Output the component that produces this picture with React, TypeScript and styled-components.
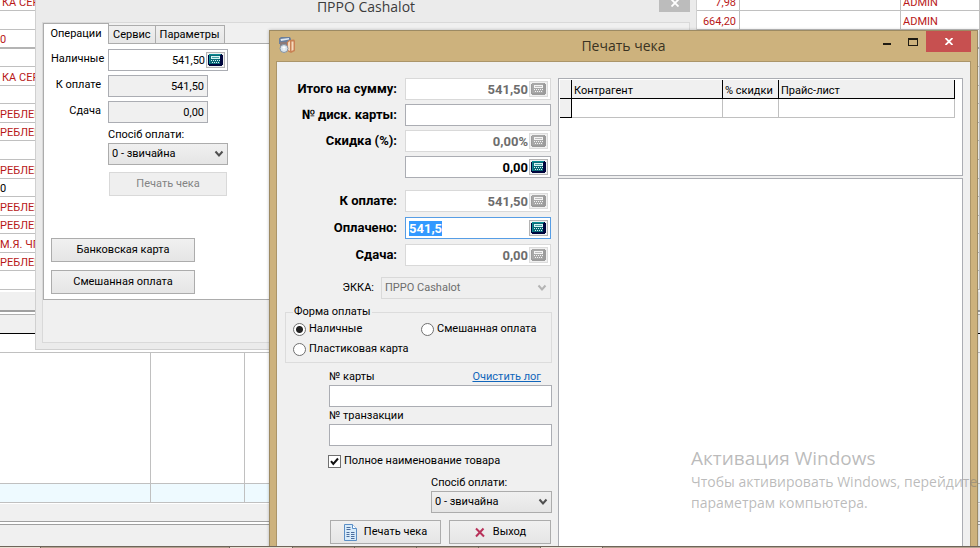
import React, { useEffect, useRef } from "react";
import styled, { createGlobalStyle, css } from "styled-components";

const UI = `Roboto, "Liberation Sans", sans-serif`;
const SEGOE = `"Open Sans", "Noto Sans", sans-serif`;

const GlobalStyle = createGlobalStyle`
  * { box-sizing: border-box; }
  html, body, #root { height: 100%; }
  body { margin: 0; overflow: hidden; background: #fff; }
  button, input, select { font: inherit; color: inherit; margin: 0; }
  ::selection { background: #3399ff; color: #fff; }
`;

const Desktop = styled.main`
  position: relative;
  height: 100%;
  overflow: hidden;
  font: 11px/14px ${UI};
  color: #000;
`;

/* ---------- application behind the windows ---------- */

const Backdrop = styled.div`
  display: flex;
  flex-direction: column;
  height: 100%;
`;

const Journal = styled.table`
  flex: none;
  display: table;
  width: 100%;
  margin-top: -8px;
  table-layout: fixed;
  border-collapse: separate;
  border-spacing: 0;
`;

const JournalLine = styled.tr<{ $short?: boolean; $heavy?: boolean; $ink?: "red" | "black" }>`
  height: ${(p) => (p.$short ? 18 : 19)}px;
  color: ${(p) => (p.$ink === "black" ? "#000" : "#b81818")};
  & > td {
    border-bottom: ${(p) => (p.$heavy ? "2px solid #b4b4b4" : "1px solid #c0c0c0")};
  }
`;

const JournalCell = styled.td<{ $right?: boolean; $inset?: boolean }>`
  padding: 0 3px 0 ${(p) => (p.$inset ? "2px" : "0")};
  overflow: hidden;
  white-space: nowrap;
  border-right: 1px solid #c0c0c0;
  text-align: ${(p) => (p.$right ? "right" : "left")};
  vertical-align: bottom;
  line-height: 14px;
`;

const Strip = styled.div<{ $h: number; $bg?: string; $top?: string; $bottom?: string }>`
  flex: none;
  height: ${(p) => p.$h}px;
  background: ${(p) => p.$bg ?? "#fff"};
  border-top: ${(p) => p.$top ?? "0"};
  border-bottom: ${(p) => p.$bottom ?? "0"};
`;

const Lanes = styled.div<{ $tint?: boolean }>`
  display: grid;
  grid-template-columns: 151px 94px 1fr;
  flex: ${(p) => (p.$tint ? "none" : "1")};
  height: ${(p) => (p.$tint ? "20px" : "auto")};
  background: ${(p) => (p.$tint ? "#eefaff" : "#fff")};
  border: solid #c0c0c0;
  border-width: ${(p) => (p.$tint ? "1px 0" : "1px 0 0")};
`;

const Lane = styled.div`
  border-right: 1px solid #c0c0c0;
`;

const Taskbar = styled.footer`
  position: absolute;
  inset: auto 0 0 0;
  height: 2px;
  display: grid;
  grid-template-columns: 41px 189px 63px repeat(5, 62px) 1fr;
  background: #b7a391;
  border-top: 1px solid #6e655a;
`;

const TaskItem = styled.span<{ $lit?: boolean }>`
  border-right: 1px solid #6e655a;
  background: ${(p) => (p.$lit ? "#eadfd2" : "#b7a391")};
`;

/* ---------- shared controls ---------- */

const Box = styled.div<{ $state?: "off" | "focus" | "plain" }>`
  display: flex;
  align-items: center;
  height: 22px;
  padding: 0 2px;
  background: #fff;
  border: 1px solid
    ${(p) => (p.$state === "off" ? "#d9d9d9" : p.$state === "focus" ? "#569de5" : "#abadb3")};
`;

const Entry = styled.input<{ $align?: "left" | "right" }>`
  flex: 1;
  min-width: 0;
  width: 100%;
  height: 16px;
  padding: 0 1px;
  border: 0;
  outline: 0;
  background: transparent;
  text-align: ${(p) => p.$align ?? "right"};
  &:disabled { color: #6d6d6d; }
`;

const CalcButton = styled.button`
  flex: none;
  display: grid;
  place-items: center;
  width: 19px;
  height: 16px;
  padding: 0;
  background: #f0f0f0;
  border: 1px solid #b4b4b4;
  &:disabled { border-color: #dcdcdc; }
`;

const buttonLook = css`
  display: flex;
  align-items: center;
  justify-content: center;
  height: 24px;
  padding: 0;
  background: linear-gradient(#f0f0f0, #e5e5e5);
  border: 1px solid #acacac;
  &:disabled { color: #838383; background: #efefef; border-color: #d9d9d9; }
`;

const PushButton = styled.button`
  ${buttonLook}
`;

const SelectShell = styled.div<{ $off?: boolean }>`
  display: grid;
  align-items: center;
  height: 22px;
  background: ${(p) => (p.$off ? "#efefef" : "linear-gradient(#f0f0f0, #e5e5e5)")};
  border: 1px solid ${(p) => (p.$off ? "#d9d9d9" : "#acacac")};
  color: ${(p) => (p.$off ? "#6d6d6d" : "#000")};
  & > * { grid-area: 1 / 1; }
  & > svg { justify-self: end; margin-right: 3px; pointer-events: none; }
`;

const NativeSelect = styled.select`
  appearance: none;
  width: 100%;
  height: 20px;
  padding: 0 18px 0 3px;
  border: 0;
  outline: 0;
  background: transparent;
  &:disabled { color: inherit; opacity: 1; }
`;

function Chevron({ off }: { off?: boolean }) {
  return (
    <svg width="10" height="8" viewBox="0 0 10 8" aria-hidden="true">
      <path d="M1.5 1.5 5 5.5 8.500 1.500" fill="none" stroke={off ? "#b4b4b4" : "#505050"} strokeWidth="2" />
    </svg>
  );
}

function Picker({ id, value, off }: { id: string; value: string; off?: boolean }) {
  return (
    <SelectShell $off={off}>
      <NativeSelect id={id} disabled={off} defaultValue={value}>
        <option>{value}</option>
      </NativeSelect>
      <Chevron off={off} />
    </SelectShell>
  );
}

function CalcIcon({ off }: { off?: boolean }) {
  const dark = off ? "#9c9c9c" : "#00063e";
  const edge = off ? "#a8a8a8" : "#0b8c94";
  const face = off ? "#a8a8a8" : "#0b6876";
  const dot = off ? "#f4f4f4" : "#d6f4f4";
  return (
    <svg width="15" height="12" viewBox="0 0 15 12" shapeRendering="crispEdges" aria-hidden="true">
      <path d="M1 0h13v1h1v10h-1v1H1v-1H0V1h1z" fill={dark} />
      <path d="M1 0h12v1H2v9H1z" fill={edge} />
      <path d="M2 1h10v9H2z" fill={face} />
      <path d="M3 2h9v3H3z" fill={dot} />
      <path d="M4 3h7v1H4z" fill={off ? "#bdbdbd" : "#48a6a8"} />
      <path
        d="M3 6h1v1H3zM5 6h1v1H5zM7 6h1v1H7zM9 6h1v1H9zM11 6h1v1h-1zM4 8h1v1H4zM6 8h1v1H6zM8 8h1v1H8zM10 8h1v1h-1z"
        fill={dot}
      />
    </svg>
  );
}

function Amount(p: { id: string; value: string; off?: boolean; focus?: boolean }) {
  const ref = useRef<HTMLInputElement>(null);
  useEffect(() => {
    if (p.focus) {
      ref.current?.focus();
      ref.current?.select();
    }
  }, [p.focus]);
  return (
    <Box $state={p.off ? "off" : p.focus ? "focus" : "plain"}>
      <Entry ref={ref} id={p.id} defaultValue={p.value} disabled={p.off} $align={p.focus ? "left" : "right"} />
      <CalcButton type="button" disabled={p.off} aria-label="Калькулятор">
        <CalcIcon off={p.off} />
      </CalcButton>
    </Box>
  );
}

/* ---------- Cashalot window ---------- */

const CashalotWindow = styled.section`
  position: absolute;
  top: 0;
  left: 35px;
  right: 283px;
  padding: 0 6px 6px;
  background: #ebebeb;
  border: 1px solid #d0d0d0;
  border-top: 0;
`;

const CashalotTitle = styled.header`
  display: grid;
  grid-template-columns: 31px 1fr 31px;
  height: 22px;
  font: 14px/14px ${SEGOE};
  color: #3c3c3c;
  text-align: center;
`;

const CashalotHeading = styled.h1`
  grid-column: 2;
  margin: 0;
  font: inherit;
`;

const FadedClose = styled.button`
  display: grid;
  place-items: start center;
  height: 12px;
  padding: 0;
  border: 0;
  background: #bcbcbc;
`;

const CashalotClient = styled.div`
  height: 321px;
  background: #f0f0f0;
  border: 1px solid #d9d9d9;
`;

const Tabs = styled.div`
  display: flex;
  align-items: flex-end;
  height: 20px;
`;

const Tab = styled.button<{ $active?: boolean }>`
  flex: none;
  width: ${(p) => (p.$active ? "66px" : "auto")};
  height: ${(p) => (p.$active ? "21px" : "18px")};
  margin: ${(p) => (p.$active ? "0 0 -1px" : "0")};
  padding: 0 4px;
  background: ${(p) => (p.$active ? "#fff" : "linear-gradient(#f0f0f0, #e6e6e6)")};
  border: 1px solid #acacac;
  border-left-width: ${(p) => (p.$active ? "1px" : "0")};
  border-bottom: 0;
`;

const TabPanel = styled.div`
  display: flex;
  flex-direction: column;
  align-items: flex-start;
  height: 257px;
  padding: 5px 7px;
  background: #fff;
  border: 1px solid #acacac;
`;

const PayGrid = styled.div`
  display: grid;
  grid-template-columns: 50px 120px;
  column-gap: 7px;
  row-gap: 4px;
  & > label { text-align: right; line-height: 20px; white-space: nowrap; }
`;

const ReadOnlyEntry = styled.input`
  width: 100px;
  height: 22px;
  padding: 0 3px;
  background: #f0f0f0;
  border: 1px solid #abadb3;
  text-align: right;
  outline: 0;
`;

const PayExtras = styled.div`
  display: grid;
  width: 120px;
  margin: 3px 0 0 57px;
  & > label { line-height: 17px; }
  & > button { margin: 7px 1px 0; }
`;

const WideActions = styled.div`
  display: grid;
  gap: 8px;
  width: 144px;
  margin-top: 42px;
`;

function Cashalot() {
  return (
    <CashalotWindow>
      <CashalotTitle>
        <CashalotHeading>ПРРО Cashalot</CashalotHeading>
        <FadedClose type="button" aria-label="Закрыть">
          <svg width="8" height="7" viewBox="0 0 8 7" aria-hidden="true">
            <path d="M.5-.5l7 7M7.500-.5l-7 7" stroke="#fff" strokeWidth="1.800" />
          </svg>
        </FadedClose>
      </CashalotTitle>
      <CashalotClient>
        <Tabs role="tablist">
          <Tab $active role="tab" aria-selected="true">Операции</Tab>
          <Tab role="tab">Сервис</Tab>
          <Tab role="tab">Параметры</Tab>
        </Tabs>
        <TabPanel role="tabpanel">
          <PayGrid>
            <label htmlFor="cash">Наличные</label>
            <Amount id="cash" value="541,50" />
            <label htmlFor="due">К оплате</label>
            <ReadOnlyEntry id="due" readOnly defaultValue="541,50" />
            <label htmlFor="change">Сдача</label>
            <ReadOnlyEntry id="change" readOnly defaultValue="0,00" />
          </PayGrid>
          <PayExtras>
            <label htmlFor="method">Спосіб оплати:</label>
            <Picker id="method" value="0 - звичайна" />
            <PushButton type="button" disabled>Печать чека</PushButton>
          </PayExtras>
          <WideActions>
            <PushButton type="button">Банковская карта</PushButton>
            <PushButton type="button">Смешанная оплата</PushButton>
          </WideActions>
        </TabPanel>
      </CashalotClient>
    </CashalotWindow>
  );
}

/* ---------- receipt window ---------- */

const ReceiptWindow = styled.section`
  position: absolute;
  inset: 30px 2px 0 269px;
  display: flex;
  flex-direction: column;
  padding: 0 6px;
  background: #cdb27d;
  border: 1px solid #9c8a63;
  border-bottom: 0;
  box-shadow: 0 0 3px rgba(0, 0, 0, 0.25);
`;

const ReceiptTitle = styled.header`
  flex: none;
  display: grid;
  grid-template-columns: 96px 1fr 96px;
  height: 30px;
`;

const TitleIcon = styled.span`
  padding: 5px 0 0 2px;
  line-height: 0;
`;

const ReceiptHeading = styled.h2`
  margin: 0;
  font: 14px/30px ${SEGOE};
  color: #3a3222;
  text-align: center;
`;

const WindowButtons = styled.div`
  display: grid;
  grid-template-columns: 24px 27px 45px;
  height: 21px;
`;

const WindowButton = styled.button<{ $danger?: boolean }>`
  display: grid;
  place-items: center;
  padding: 0;
  border: 0;
  background: ${(p) => (p.$danger ? "#c75050" : "transparent")};
`;

const ReceiptBody = styled.div`
  flex: 1;
  min-height: 0;
  display: grid;
  grid-template-columns: 267px 1fr;
  column-gap: 6px;
  padding: 16px 7px 0 8px;
  background: #f0f0f0;
  border: 1px solid #ab9569;
  border-bottom: 0;
`;

const FormColumn = styled.form`
  display: flex;
  flex-direction: column;
`;

const Totals = styled.div<{ $gap: number; $top?: number }>`
  display: grid;
  grid-template-columns: 112px 146px;
  column-gap: 8px;
  row-gap: ${(p) => p.$gap}px;
  align-items: center;
  margin-top: ${(p) => p.$top ?? 0}px;
  font-size: 13px;
  font-weight: 700;
  & > label { text-align: right; white-space: nowrap; }
`;

const PlainInput = styled.input`
  width: 100%;
  height: 22px;
  padding: 0 3px;
  background: #fff;
  border: 1px solid #abadb3;
  outline: 0;
`;

const RegisterRow = styled.div`
  display: grid;
  grid-template-columns: 89px 170px;
  column-gap: 7px;
  align-items: center;
  margin-top: 11px;
  & > label { text-align: right; }
`;

const PaymentForm = styled.fieldset`
  display: grid;
  grid-template-columns: 128px 1fr;
  row-gap: 6px;
  min-width: 0;
  height: 58px;
  margin: 6px 0 0;
  padding: 3px 7px 0;
  border: 1px solid #dcdcdc;
  & > legend { padding: 0 1px; line-height: 14px; }
`;

const Choice = styled.label`
  display: flex;
  align-items: center;
  gap: 3px;
  height: 14px;
  white-space: nowrap;
`;

const Radio = styled.input`
  appearance: none;
  flex: none;
  width: 13px;
  height: 13px;
  background: #fff;
  border: 1px solid #707070;
  border-radius: 50%;
  &:checked { background: radial-gradient(#222 0 3px, #fff 4px); }
`;

const CardFields = styled.div`
  display: grid;
  margin: 5px 0 0 44px;
  line-height: 17px;
`;

const CardHead = styled.div`
  display: flex;
  justify-content: space-between;
  padding-right: 11px;
`;

const LogLink = styled.a`
  color: #1166bb;
  text-decoration: underline;
`;

const FullName = styled.label`
  display: flex;
  align-items: center;
  gap: 3px;
  height: 16px;
  margin: 7px 0 0 43px;
`;

const TickShell = styled.span`
  display: grid;
  width: 13px;
  height: 13px;
  & > * { grid-area: 1 / 1; }
  & > svg { pointer-events: none; }
`;

const Tick = styled.input`
  appearance: none;
  width: 13px;
  height: 13px;
  background: #fff;
  border: 1px solid #707070;
`;

const MethodBlock = styled.div`
  display: grid;
  width: 121px;
  margin: 5px 0 0 146px;
  & > label { line-height: 17px; }
`;

const FooterActions = styled.div`
  display: grid;
  grid-template-columns: 111px 102px;
  gap: 8px;
  margin: 7px 0 0 45px;
  & svg { margin-right: 7px; }
`;

const SideColumn = styled.div`
  display: flex;
  flex-direction: column;
  gap: 2px;
  min-width: 0;
`;

const Pane = styled.div<{ $fill?: boolean }>`
  flex: ${(p) => (p.$fill ? "1" : "none")};
  height: ${(p) => (p.$fill ? "auto" : "98px")};
  padding: 1px 7px 0 1px;
  background: #fff;
  border: 1px solid #abadb3;
  border-bottom-width: ${(p) => (p.$fill ? "0" : "1px")};
`;

const PartnerTable = styled.table`
  width: 100%;
  table-layout: fixed;
  border-collapse: separate;
  border-spacing: 0;
  & th, & td { height: 19px; padding: 0 2px; text-align: left; font-weight: 400; white-space: nowrap; }
  & th { background: #f0f0f0; border: solid #000; border-width: 0 1px 1px 0; vertical-align: bottom; }
  & td { border: solid #c0c0c0; border-width: 0 1px 1px 0; }
  & td:first-child { background: #f0f0f0; border-color: #000; }
`;

const Watermark = styled.aside`
  position: absolute;
  left: 691px;
  top: 446px;
  font: 14px/21px ${SEGOE};
  color: rgba(120, 120, 120, 0.5);
  white-space: nowrap;
  pointer-events: none;
`;

const WatermarkTitle = styled.p`
  margin: 0;
  font-size: 19px;
  line-height: 25px;
`;

function Receipt() {
  return (
    <ReceiptWindow>
      <ReceiptTitle>
        <TitleIcon>
          <svg width="18" height="18" viewBox="0 0 18 18" aria-hidden="true">
            <path d="M1 2.500 3 1h9l1 2v5H1z" fill="#6a7f9c" />
            <path d="M2.500 3 11 2v1.500L3 5z" fill="#dfe8f2" />
            <path d="M2 6h8v5H2z" fill="#8b7a7a" />
            <path d="M9 6l2-2 5-.5 1 1V15l-4 2-4-2z" fill="#c98255" />
            <path d="M10 6.500 12 5v10l-2-1zM13.500 5.500h2V14l-2 1z" fill="#f6d9bd" />
            <circle cx="6" cy="12.500" r="4" fill="#dce5ec" stroke="#8494a5" />
            <path d="M4.500 11.500h3M6 10v4" stroke="#fff" />
          </svg>
        </TitleIcon>
        <ReceiptHeading>Печать чека</ReceiptHeading>
        <WindowButtons>
          <WindowButton type="button" aria-label="Свернуть">
            <svg width="9" height="9" viewBox="0 0 9 9"><path d="M0 6h8v2H0z" fill="#1f1b12" /></svg>
          </WindowButton>
          <WindowButton type="button" aria-label="Развернуть">
            <svg width="10" height="8" viewBox="0 0 10 8" shapeRendering="crispEdges">
              <path d="M0 0h10v8H0zM1 2v5h8V2z" fill="#1f1b12" fillRule="evenodd" />
            </svg>
          </WindowButton>
          <WindowButton type="button" $danger aria-label="Закрыть">
            <svg width="8" height="7" viewBox="0 0 8 7"><path d="M.5 0l7 7M7.500 0l-7 7" stroke="#fff" strokeWidth="1.800" /></svg>
          </WindowButton>
        </WindowButtons>
      </ReceiptTitle>
      <ReceiptBody>
        <FormColumn onSubmit={(e) => e.preventDefault()}>
          <Totals $gap={4}>
            <label htmlFor="total">Итого на сумму:</label>
            <Amount id="total" value="541,50" off />
            <label htmlFor="disc-card">№ диск. карты:</label>
            <PlainInput id="disc-card" />
            <label htmlFor="disc-rate">Скидка (%):</label>
            <Amount id="disc-rate" value="0,00%" off />
            <label htmlFor="disc-sum" />
            <Amount id="disc-sum" value="0,00" />
          </Totals>
          <Totals $gap={5} $top={12}>
            <label htmlFor="to-pay">К оплате:</label>
            <Amount id="to-pay" value="541,50" off />
            <label htmlFor="paid">Оплачено:</label>
            <Amount id="paid" value="541,5" focus />
            <label htmlFor="rest">Сдача:</label>
            <Amount id="rest" value="0,00" off />
          </Totals>
          <RegisterRow>
            <label htmlFor="register">ЭККА:</label>
            <Picker id="register" value="ПРРО Cashalot" off />
          </RegisterRow>
          <PaymentForm>
            <legend>Форма оплаты</legend>
            <Choice><Radio type="radio" name="form" defaultChecked />Наличные</Choice>
            <Choice><Radio type="radio" name="form" />Смешанная оплата</Choice>
            <Choice><Radio type="radio" name="form" />Пластиковая карта</Choice>
          </PaymentForm>
          <CardFields>
            <CardHead>
              <label htmlFor="card-no">№ карты</label>
              <LogLink href="#log">Очистить лог</LogLink>
            </CardHead>
            <PlainInput id="card-no" />
            <label htmlFor="txn-no">№ транзакции</label>
            <PlainInput id="txn-no" />
          </CardFields>
          <FullName>
            <TickShell>
              <Tick type="checkbox" defaultChecked />
              <svg width="13" height="13" viewBox="0 0 13 13" aria-hidden="true">
                <path d="M3 6.200 5.300 9 10 3.500" fill="none" stroke="#111" strokeWidth="2" />
              </svg>
            </TickShell>
            Полное наименование товара
          </FullName>
          <MethodBlock>
            <label htmlFor="pay-method">Спосіб оплати:</label>
            <Picker id="pay-method" value="0 - звичайна" />
          </MethodBlock>
          <FooterActions>
            <PushButton type="submit">
              <svg width="13" height="17" viewBox="0 0 13 17" aria-hidden="true">
                <path d="M.5.5h8l4 4v12H.5z" fill="#d8ebfa" stroke="#5b8fc6" />
                <path d="M8.500.5v4h4" fill="#fff" stroke="#5b8fc6" />
                <path d="M2.500 3.500h4M2.500 5.500h4M2.500 8.500h3M7 8.500h3.500M2.500 10.500h3M7 10.500h3.500M2.500 12.500h3M7 12.500h3.500M7 14.500h3.500" stroke="#4a6c9c" />
              </svg>
              Печать чека
            </PushButton>
            <PushButton type="button">
              <svg width="12" height="11" viewBox="0 0 12 11" aria-hidden="true">
                <path d="M2 1.500 10 9.500M9.500 1.500 2 9.500" stroke="#b8325a" strokeWidth="2" />
              </svg>
              Выход
            </PushButton>
          </FooterActions>
        </FormColumn>
        <SideColumn>
          <Pane>
            <PartnerTable>
              <colgroup>
                <col width="12" />
                <col width="151" />
                <col width="56" />
                <col />
              </colgroup>
              <thead>
                <tr><th /><th>Контрагент</th><th>% скидки</th><th>Прайс-лист</th></tr>
              </thead>
              <tbody>
                <tr><td /><td /><td /><td /></tr>
              </tbody>
            </PartnerTable>
          </Pane>
          <Pane $fill />
        </SideColumn>
      </ReceiptBody>
    </ReceiptWindow>
  );
}

type JournalRow = {
  name?: string;
  ink?: "red" | "black";
  sum?: string;
  user?: string;
  short?: boolean;
  heavy?: boolean;
  inset?: boolean;
};

const journal: JournalRow[] = [
  { name: "КА СЕР", inset: true, sum: "7,98", user: "ADMIN" },
  { sum: "664,20", user: "ADMIN" },
  { name: "0", heavy: true },
  { short: true },
  { name: "КА СЕР", inset: true },
  { short: true },
  { name: "РЕБЛЕН" },
  { name: "РЕБЛЕН", short: true },
  {},
  { name: "РЕБЛЕН" },
  { name: "0", ink: "black", short: true },
  { name: "РЕБЛЕН" },
  { name: "РЕБЛЕН", short: true },
  { name: "М.Я. ЧП" },
  { name: "РЕБЛЕН", short: true },
  {},
];

export default function App() {
  return (
    <Desktop>
      <GlobalStyle />
      <Backdrop>
        <Journal>
          <colgroup>
            <col />
            <col width="80" />
            <col width="161" />
            <col width="79" />
          </colgroup>
          <tbody>
            {journal.map((r, i) => (
              <JournalLine key={i} $short={r.short} $heavy={r.heavy} $ink={r.ink}>
                <JournalCell $inset={r.inset}>{r.name}</JournalCell>
                <JournalCell $right>{r.sum}</JournalCell>
                <JournalCell />
                <JournalCell $inset>{r.user}</JournalCell>
              </JournalLine>
            ))}
          </tbody>
        </Journal>
        <Strip $h={2} />
        <Strip $h={18} $bg="#f0f0f0" />
        <Strip $h={4} $top="2px solid #a0a0a0" />
        <Strip $h={20} $bg="#f0f0f0" $top="1px solid #b0b0b0" $bottom="1px solid #000" />
        <Strip $h={18} />
        <Lanes>
          <Lane />
          <Lane />
        </Lanes>
        <Lanes $tint>
          <Lane />
          <Lane />
        </Lanes>
        <Strip $h={18} $bg="#f0f0f0" $top="1px solid #fff" />
        <Strip $h={3} $top="1px solid #a0a0a0" />
        <Strip $h={24} $bg="#f0f0f0" $top="1px solid #a0a0a0" />
      </Backdrop>
      <Cashalot />
      <Receipt />
      <Watermark>
        <WatermarkTitle>Активация Windows</WatermarkTitle>
        Чтобы активировать Windows, перейдите
        <br />
        параметрам компьютера.
      </Watermark>
      <Taskbar>
        <TaskItem $lit />
        <TaskItem />
        <TaskItem $lit />
        <TaskItem />
        <TaskItem />
        <TaskItem />
        <TaskItem />
        <TaskItem $lit />
      </Taskbar>
    </Desktop>
  );
}
